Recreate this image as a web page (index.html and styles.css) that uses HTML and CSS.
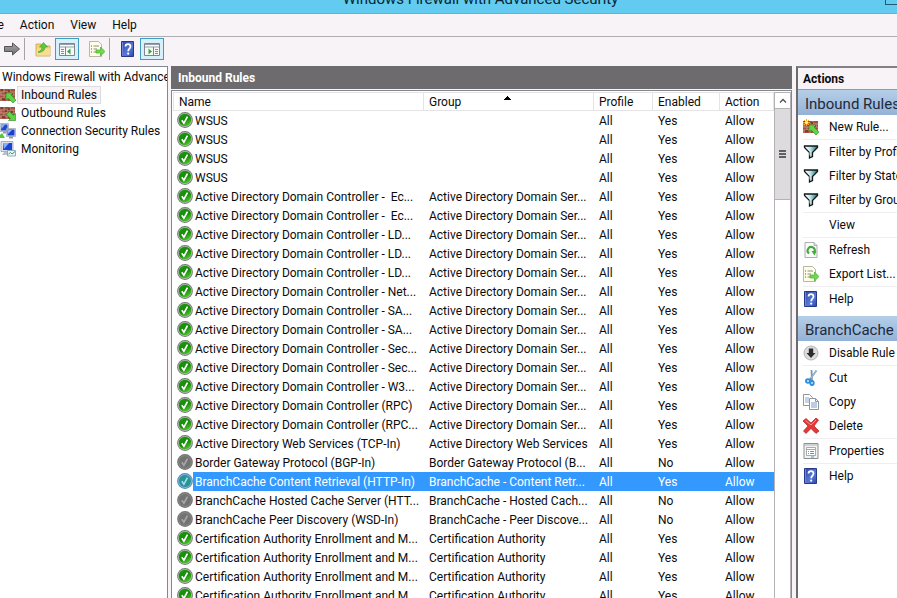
FILE: index.html
```
<!DOCTYPE html>
<html lang="en">
<head>
<meta charset="utf-8">
<title>Windows Firewall with Advanced Security</title>
<link rel="stylesheet" href="styles.css">
</head>
<body>
<svg class="sprite" aria-hidden="true">
  <defs>
    <linearGradient id="gGreen" x1="0" y1="0" x2="0.6" y2="1"><stop offset="0" stop-color="#1f9a12"/><stop offset="0.6" stop-color="#168a08"/><stop offset="1" stop-color="#4cc22c"/></linearGradient>
    <linearGradient id="gHelp" x1="0" y1="0" x2="1" y2="1"><stop offset="0" stop-color="#2e45a4"/><stop offset="0.6" stop-color="#5878d8"/><stop offset="1" stop-color="#2c44a8"/></linearGradient>
    <linearGradient id="gFunnel" x1="0" y1="0" x2="1" y2="0"><stop offset="0" stop-color="#ffffff"/><stop offset="0.45" stop-color="#bfe4e4"/><stop offset="1" stop-color="#0c6f78"/></linearGradient>
    <linearGradient id="gArrow" x1="0" y1="0" x2="0" y2="1"><stop offset="0" stop-color="#a9a9a9"/><stop offset="1" stop-color="#6e6e6e"/></linearGradient>
  </defs>
  <symbol id="ok" viewBox="0 0 16 16"><circle cx="8" cy="8" r="7.9" fill="#6f7a70"/><circle cx="8" cy="8" r="7" fill="#b4bdb2"/><circle cx="8" cy="8" r="6.2" fill="url(#gGreen)"/><path d="M4.8 8.2l2.1 3 3.6-6.6" fill="none" stroke="#fff" stroke-width="1.7"/></symbol>
  <symbol id="off" viewBox="0 0 16 16"><circle cx="8" cy="8" r="7.9" fill="#757575"/><circle cx="8" cy="8" r="6.8" fill="#8b8b8b"/><circle cx="8" cy="8" r="6" fill="#737373"/><path d="M4.8 8.2l2.1 3 3.6-6.6" fill="none" stroke="#a8a8a8" stroke-width="1.6"/></symbol>
  <symbol id="sel" viewBox="0 0 16 16"><circle cx="8" cy="8" r="7.9" fill="#4f8bb8"/><circle cx="8" cy="8" r="7" fill="#78b2e0"/><circle cx="8" cy="8" r="6" fill="#2a9490"/><path d="M4.8 8.2l2.1 3 3.6-6.6" fill="none" stroke="#a5daf5" stroke-width="1.6"/></symbol>
  <symbol id="bricks" viewBox="0 0 16 16"><path d="M0 2h15v12H0z" fill="#a4503f"/><path d="M0 5h15M0 8h15M0 11h15M4 2v3M10 2v3M1 5v3M7 5v3M13 5v3M4 8v3M10 8v3M1 11v3M7 11v3" stroke="#c99a8c" stroke-width="0.8"/><path d="M1 3h2M5 6h2M8 4h2M2 12h3M11 7h2" stroke="#6e3327" stroke-width="1.4"/></symbol>
  <symbol id="inbound" viewBox="0 0 16 16"><use href="#bricks"/><path d="M6 6h7l-2 2 5 5-3 3-5-5-2 2z" fill="#5fd445" stroke="#268c1c" stroke-width="0.6"/></symbol>
  <symbol id="outbound" viewBox="0 0 16 16"><use href="#bricks"/><path d="M15.500 15.500h-7l2-2-4-4 3-3 4 4 2-2z" fill="#5fd445" stroke="#268c1c" stroke-width="0.6"/></symbol>
  <symbol id="newrule" viewBox="0 0 16 16"><use href="#inbound"/><path d="M3.500 0v7M0 3.500h7M1 1l5 5M6 1l-5 5" stroke="#f6a92c" stroke-width="1"/><circle cx="3.500" cy="3.500" r="1.500" fill="#fff3a0"/></symbol>
  <symbol id="consec" viewBox="0 0 16 16"><path d="M0 .5h8.500v8H0z" fill="#d9dde8" stroke="#8c94a8" stroke-width="0.6"/><path d="M1 1.500h6.500v6H1z" fill="#2148d0"/><path d="M1 1.500h4L1.500 6z" fill="#8fb4f8"/><path d="M3 8.500h3v2H3z" fill="#8e98ad"/><path d="M6.500 5.500h9v8h-9z" fill="#d9dde8" stroke="#8c94a8" stroke-width="0.6"/><path d="M7.500 6.500h7v6h-7z" fill="#1b3ed0"/><path d="M8 7h4l-4 4z" fill="#8fb4f8"/><path d="M9 13.500h4v2H9z" fill="#8e98ad"/><path d="M0 15v-3l2-2 3 5z" fill="#55c83a"/></symbol>
  <symbol id="monitor" viewBox="0 0 16 16"><path d="M1 0.500h12v10H1z" fill="#dadfe8" stroke="#8a93a8" stroke-width="0.7"/><path d="M3 2h9v7H3z" fill="#1a44d6"/><path d="M3 2h6L4 8z" fill="#84b0f8"/><path d="M4 11h5l1 3H2z" fill="#b7bfcc"/><path d="M7.500 9.500h8v5.500h-8z" fill="#e8f4fa" stroke="#7e9ab0" stroke-width="0.8"/><path d="M8.500 13l2-1.500 1.500 1.500 3-2.500" fill="none" stroke="#34a25c"/></symbol>
  <symbol id="funnel" viewBox="0 0 16 16"><path d="M1.500 2h13v1.500l-5 5v4l-3 1.500v-5.500l-5-5z" fill="url(#gFunnel)" stroke="#10181c" stroke-width="1.300"/><path d="M3 3l4 4.500v4" fill="none" stroke="#fff" stroke-width="0.8"/></symbol>
  <symbol id="refresh" viewBox="0 0 16 16"><path d="M2 .5h9l3 3v12H2z" fill="#fafafa" stroke="#9a9a9a" stroke-width="0.8"/><path d="M11 .5v3h3" fill="#ddd" stroke="#9a9a9a" stroke-width="0.7"/><path d="M6 11.500a3.600 3.600 0 1 1 5.500-1.500" fill="none" stroke="#3dab35" stroke-width="2"/><path d="M8.500 9h5l-2 4.500z" fill="#3dab35"/></symbol>
  <symbol id="export" viewBox="0 0 16 16"><path d="M.5.5h9l3 3v12H.5z" fill="#fffde8" stroke="#a9a590" stroke-width="0.8"/><path d="M2 5h1M2 8h1M2 11h1" stroke="#555" stroke-width="1.200"/><path d="M4.500 5H10M4.500 8H8M4.500 11H8" stroke="#8c8c8c"/><path d="M7 9h4.500V6l4.500 4.500-4.500 4.500v-3H7z" fill="#6fd84c" stroke="#4caa35" stroke-width="0.7"/></symbol>
  <symbol id="help" viewBox="0 0 16 16"><path d="M1.500.5h12v15h-12z" fill="url(#gHelp)" stroke="#26388a"/><path d="M2.500 1v14" stroke="#6f86d8"/><path d="M5.500 5.500c0-3.200 5-3.200 5 0 0 2-2.300 2.200-2.300 4.700" fill="none" stroke="#fff" stroke-width="1.700"/><circle cx="8.200" cy="12.700" r="1.100" fill="#fff"/></symbol>
  <symbol id="disable" viewBox="0 0 16 16"><circle cx="8" cy="8" r="7" fill="#dcdcdc" stroke="#b4b4b4"/><path d="M5.800 3.500h4.400V8h2.300L8 13 3.500 8h2.300z" fill="#2c2c2c"/></symbol>
  <symbol id="cut" viewBox="0 0 16 16"><path d="M13.500.5L6.500 10M8.500 0L9 11" stroke="#7c98b0" stroke-width="1.800"/><path d="M13.500.5L8 8" stroke="#c4d4e0" stroke-width="0.700"/><ellipse cx="5" cy="11" rx="2" ry="1.800" fill="none" stroke="#2a8fdc" stroke-width="1.900"/><ellipse cx="9" cy="13" rx="1.700" ry="2" fill="none" stroke="#2a8fdc" stroke-width="1.900"/></symbol>
  <symbol id="copy" viewBox="0 0 16 16"><path d="M.5.500h6l3 3v8h-9z" fill="#fff" stroke="#8e969e"/><path d="M2 4h4M2 6h5M2 8h4" stroke="#8ca8c8"/><path d="M6.500 4.500h6l3 3v8h-9z" fill="#fff" stroke="#8e969e"/><path d="M12.500 4.500v3h3" fill="none" stroke="#8e969e"/><path d="M8 9h6M8 11h6M8 13h6" stroke="#7a9cc4"/></symbol>
  <symbol id="delete" viewBox="0 0 16 16"><path d="M0 3l3-2.500 5 4.500 5-5 2.500 2-4.500 6 5 5-3 2.500-5-5-5 5L.5 13 5 8z" fill="#e23838" stroke="#b81c1c" stroke-width="0.7"/><path d="M2.500 2.500l5.500 4.500 5-5" fill="none" stroke="#f49a94"/></symbol>
  <symbol id="props" viewBox="0 0 16 16"><path d="M1 .5h14v15H1z" fill="#f2f2f2" stroke="#8d8d8d"/><path d="M1.500 2h13" stroke="#a9b0b8"/><path d="M3.500 4.500h9v8h-9z" fill="#fff" stroke="#9aa2aa" stroke-width="0.900"/><path d="M3.500 6.500h9" stroke="#a8a8a8"/><path d="M5 8.500h1M5 10.500h1" stroke="#35b5c8"/><path d="M7 8.500h4M7 10.500h4" stroke="#8a8a8a"/><path d="M8 14h3" stroke="#49cbe0" stroke-width="1.400"/></symbol>
  <symbol id="forward" viewBox="0 0 16 16"><path d="M.5 5.500h8V2L15.500 8l-7 6v-3.500h-8z" fill="url(#gArrow)" stroke="#555"/></symbol>
  <symbol id="folder" viewBox="0 0 16 16"><path d="M1 15V3h5l1.500 2H15v10z" fill="#f2d27a" stroke="#c9a24c" stroke-width="0.8"/><path d="M1.500 14.500l.5-7h13v7z" fill="#f8dd90"/><path d="M3 11c3-1 4-3 4-5H4.500l4-4.500L12.500 6H10c0 3-2 5-6.500 5.500z" fill="#5fc93e" stroke="#3a9a26" stroke-width="0.600"/></symbol>
  <symbol id="treepane" viewBox="0 0 16 16"><path d="M.5 2.500h15v12H.5z" fill="#f8f8f8" stroke="#7d868e"/><path d="M1 3.500h14M1 6h14" stroke="#98a1a8"/><path d="M6.500 6v8" stroke="#7d868e"/><path d="M2 8.500h3M2 10.500h3M2 12.500h3" stroke="#6b92b8"/><path d="M11.500 7.500v6L8 10.500z" fill="#3aa83a"/></symbol>
  <symbol id="actpane" viewBox="0 0 16 16"><path d="M.5 2.500h15v12H.5z" fill="#f8f8f8" stroke="#7d868e"/><path d="M1 3.500h14M1 6h14" stroke="#98a1a8"/><path d="M9.500 6v8" stroke="#7d868e"/><path d="M11 8.500H14M11 10.500H14M11 12.500H14" stroke="#6b92b8"/><path d="M4.500 7.500v6L8 10.500z" fill="#3aa83a"/></symbol>
</svg>
<div class="window">
  <header class="title">Windows Firewall with Advanced Security<span class="caption"></span></header>
  <nav class="menu"><button>File</button><button>Action</button><button>View</button><button>Help</button></nav>
  <div class="toolbar">
    <button aria-label="Forward"><svg><use href="#forward"/></svg></button>
    <span class="rule"></span>
    <button aria-label="Up one level"><svg><use href="#folder"/></svg></button>
    <button class="on" aria-label="Show or hide console tree"><svg><use href="#treepane"/></svg></button>
    <span class="space"></span>
    <button aria-label="Export list"><svg><use href="#export"/></svg></button>
    <span class="rule"></span>
    <button aria-label="Help"><svg><use href="#help"/></svg></button>
    <button class="on" aria-label="Show or hide action pane"><svg><use href="#actpane"/></svg></button>
  </div>
  <div class="panes">
    <nav class="tree">
      <a class="root" href="#">Windows Firewall with Advanced Security</a>
      <a href="#"><svg><use href="#inbound"/></svg><span class="current">Inbound Rules</span></a>
      <a href="#"><svg><use href="#outbound"/></svg><span>Outbound Rules</span></a>
      <a href="#"><svg><use href="#consec"/></svg><span>Connection Security Rules</span></a>
      <a href="#"><svg><use href="#monitor"/></svg><span>Monitoring</span></a>
    </nav>
    <main class="center">
      <h1>Inbound Rules</h1>
      <div class="list">
        <table>
          <colgroup><col class="c-name"><col class="c-group"><col class="c-profile"><col class="c-enabled"><col></colgroup>
          <thead><tr><th>Name</th><th class="sorted">Group</th><th>Profile</th><th>Enabled</th><th>Action</th></tr></thead>
          <tbody>
            <tr><td><svg><use href="#ok"/></svg>WSUS</td><td></td><td>All</td><td>Yes</td><td>Allow</td></tr>
            <tr><td><svg><use href="#ok"/></svg>WSUS</td><td></td><td>All</td><td>Yes</td><td>Allow</td></tr>
            <tr><td><svg><use href="#ok"/></svg>WSUS</td><td></td><td>All</td><td>Yes</td><td>Allow</td></tr>
            <tr><td><svg><use href="#ok"/></svg>WSUS</td><td></td><td>All</td><td>Yes</td><td>Allow</td></tr>
            <tr><td><svg><use href="#ok"/></svg>Active Directory Domain Controller -  Ec...</td><td>Active Directory Domain Ser...</td><td>All</td><td>Yes</td><td>Allow</td></tr>
            <tr><td><svg><use href="#ok"/></svg>Active Directory Domain Controller -  Ec...</td><td>Active Directory Domain Ser...</td><td>All</td><td>Yes</td><td>Allow</td></tr>
            <tr><td><svg><use href="#ok"/></svg>Active Directory Domain Controller - LD...</td><td>Active Directory Domain Ser...</td><td>All</td><td>Yes</td><td>Allow</td></tr>
            <tr><td><svg><use href="#ok"/></svg>Active Directory Domain Controller - LD...</td><td>Active Directory Domain Ser...</td><td>All</td><td>Yes</td><td>Allow</td></tr>
            <tr><td><svg><use href="#ok"/></svg>Active Directory Domain Controller - LD...</td><td>Active Directory Domain Ser...</td><td>All</td><td>Yes</td><td>Allow</td></tr>
            <tr><td><svg><use href="#ok"/></svg>Active Directory Domain Controller - Net...</td><td>Active Directory Domain Ser...</td><td>All</td><td>Yes</td><td>Allow</td></tr>
            <tr><td><svg><use href="#ok"/></svg>Active Directory Domain Controller - SA...</td><td>Active Directory Domain Ser...</td><td>All</td><td>Yes</td><td>Allow</td></tr>
            <tr><td><svg><use href="#ok"/></svg>Active Directory Domain Controller - SA...</td><td>Active Directory Domain Ser...</td><td>All</td><td>Yes</td><td>Allow</td></tr>
            <tr><td><svg><use href="#ok"/></svg>Active Directory Domain Controller - Sec...</td><td>Active Directory Domain Ser...</td><td>All</td><td>Yes</td><td>Allow</td></tr>
            <tr><td><svg><use href="#ok"/></svg>Active Directory Domain Controller - Sec...</td><td>Active Directory Domain Ser...</td><td>All</td><td>Yes</td><td>Allow</td></tr>
            <tr><td><svg><use href="#ok"/></svg>Active Directory Domain Controller - W3...</td><td>Active Directory Domain Ser...</td><td>All</td><td>Yes</td><td>Allow</td></tr>
            <tr><td><svg><use href="#ok"/></svg>Active Directory Domain Controller (RPC)</td><td>Active Directory Domain Ser...</td><td>All</td><td>Yes</td><td>Allow</td></tr>
            <tr><td><svg><use href="#ok"/></svg>Active Directory Domain Controller (RPC...</td><td>Active Directory Domain Ser...</td><td>All</td><td>Yes</td><td>Allow</td></tr>
            <tr><td><svg><use href="#ok"/></svg>Active Directory Web Services (TCP-In)</td><td>Active Directory Web Services</td><td>All</td><td>Yes</td><td>Allow</td></tr>
            <tr><td><svg><use href="#off"/></svg>Border Gateway Protocol (BGP-In)</td><td>Border Gateway Protocol (B...</td><td>All</td><td>No</td><td>Allow</td></tr>
            <tr class="selected"><td><svg><use href="#sel"/></svg>BranchCache Content Retrieval (HTTP-In)</td><td>BranchCache - Content Retr...</td><td>All</td><td>Yes</td><td>Allow</td></tr>
            <tr><td><svg><use href="#off"/></svg>BranchCache Hosted Cache Server (HTT...</td><td>BranchCache - Hosted Cach...</td><td>All</td><td>No</td><td>Allow</td></tr>
            <tr><td><svg><use href="#off"/></svg>BranchCache Peer Discovery (WSD-In)</td><td>BranchCache - Peer Discove...</td><td>All</td><td>No</td><td>Allow</td></tr>
            <tr><td><svg><use href="#ok"/></svg>Certification Authority Enrollment and M...</td><td>Certification Authority</td><td>All</td><td>Yes</td><td>Allow</td></tr>
            <tr><td><svg><use href="#ok"/></svg>Certification Authority Enrollment and M...</td><td>Certification Authority</td><td>All</td><td>Yes</td><td>Allow</td></tr>
            <tr><td><svg><use href="#ok"/></svg>Certification Authority Enrollment and M...</td><td>Certification Authority</td><td>All</td><td>Yes</td><td>Allow</td></tr>
            <tr><td><svg><use href="#ok"/></svg>Certification Authority Enrollment and M...</td><td>Certification Authority</td><td>All</td><td>Yes</td><td>Allow</td></tr>
          </tbody>
        </table>
        <div class="scroll"><button aria-label="Scroll up"><svg viewBox="0 0 8 6"><path d="M1 4.500l3-3 3 3" fill="none" stroke="#505050" stroke-width="1.300"/></svg></button><div class="thumb"><i></i><i></i><i></i></div></div>
      </div>
    </main>
    <aside class="actions">
      <h2>Actions</h2>
      <h3>Inbound Rules</h3>
      <ul>
        <li><button><svg><use href="#newrule"/></svg>New Rule...</button></li>
        <li class="sep"><button><svg><use href="#funnel"/></svg>Filter by Profile</button></li>
        <li><button><svg><use href="#funnel"/></svg>Filter by State</button></li>
        <li><button><svg><use href="#funnel"/></svg>Filter by Group</button></li>
        <li class="sep"><button><svg></svg>View</button></li>
        <li class="sep"><button><svg><use href="#refresh"/></svg>Refresh</button></li>
        <li><button><svg><use href="#export"/></svg>Export List...</button></li>
        <li class="sep"><button><svg><use href="#help"/></svg>Help</button></li>
      </ul>
      <h3>BranchCache Content Retrieval (HTTP-In)</h3>
      <ul>
        <li><button><svg><use href="#disable"/></svg>Disable Rule</button></li>
        <li class="sep"><button><svg><use href="#cut"/></svg>Cut</button></li>
        <li><button><svg><use href="#copy"/></svg>Copy</button></li>
        <li><button><svg><use href="#delete"/></svg>Delete</button></li>
        <li class="sep"><button><svg><use href="#props"/></svg>Properties</button></li>
        <li class="sep"><button><svg><use href="#help"/></svg>Help</button></li>
      </ul>
    </aside>
  </div>
</div>
</body>
</html>
```
FILE: styles.css
```
* { box-sizing: border-box; }
body { margin: 0; background: #f7f3f7; color: #0c0c0c; font: 12px/18px Roboto, "Open Sans", sans-serif; }
button { margin: 0; padding: 0; border: 0; background: none; color: inherit; font: inherit; }
a { color: inherit; text-decoration: none; }
svg { width: 16px; height: 16px; flex: none; display: block; }
.sprite { position: absolute; width: 0; height: 0; }
.window { height: 100vh; display: flex; flex-direction: column; overflow: hidden; white-space: nowrap; }

.title { position: relative; height: 14px; flex: none; display: flex; align-items: flex-end; justify-content: center; padding: 0 0 4px 64px; overflow: hidden; background: #63cbef; border-bottom: 1px solid #7fa9bb; color: #08262f; font-size: 15px; line-height: 20px; }
.caption { position: absolute; right: 0; top: 0; width: 12px; height: 5px; border: 1px solid #1e5a70; border-top: 0; border-right: 0; }

.menu { height: 23px; flex: none; display: flex; align-items: center; gap: 16px; padding-right: 15px; border-bottom: 1px solid #b0adb0; }
.menu button:first-child { margin-left: -15px; }
.toolbar { height: 29px; flex: none; display: flex; align-items: center; padding: 0 0 5px 0; }
.toolbar button { width: 24px; height: 22px; display: flex; align-items: center; justify-content: center; }
.toolbar .on { border: 1px solid #3f9cc0; background: #d8f0fb; }
.toolbar .rule { width: 1px; height: 22px; margin: 0 6px 0 0; background: #a5a3a5; }
.toolbar .space { width: 6px; }

.panes { flex: 1; min-height: 0; display: flex; }
.tree { width: 168px; flex: none; padding-top: 1px; overflow: hidden; background: #fff; border-top: 1px solid #828790; border-right: 1px solid #828790; }
.tree a { display: flex; align-items: center; gap: 2px; height: 18px; }
.tree .root { padding-left: 2px; }
.tree span { padding: 0 3px; line-height: 18px; }
.tree .current { margin: 0 -1px; line-height: 16px; background: #f7f3f7; border: 1px solid #dedade; }

.center { flex: 1; min-width: 0; margin: 0 4px 0 3px; display: flex; flex-direction: column; }
.center h1 { flex: none; height: 23px; margin: 0 0 1px; padding: 2px 7px 0; background: #6d6b6d; color: #fff; font-size: 12px; line-height: 21px; }
.list { flex: 1; min-height: 0; display: flex; padding: 1px 0 0 1px; overflow: hidden; background: #fff; border: 1px solid #828790; border-bottom: 0; }
table { flex: 1; min-width: 0; align-self: flex-start; table-layout: fixed; border-collapse: separate; border-spacing: 0; }
.c-name { width: 251px; }
.c-group { width: 170px; }
.c-profile { width: 59px; }
.c-enabled { width: 67px; }
th { height: 19px; padding: 2px 5px 0; border: 1px solid #e6e3e6; border-left: 0; text-align: left; font-weight: 400; line-height: 15px; }
th:first-child { border-left: 1px solid #e6e3e6; }
.sorted { background: conic-gradient(from 135deg at 50% 0, #000 90deg, transparent 0) 49% 3px / 8px 4px no-repeat; }
td { height: 19px; padding: 2px 0 0 5px; line-height: 17px; overflow: hidden; white-space: pre; }
td svg { float: left; margin: -1px 2px 0 -1px; }
.selected td { background: #3399ff; color: #fff; }
.selected td:first-child { background: linear-gradient(#3399ff, #3399ff) 20px 0 no-repeat; }
.scroll { width: 17px; flex: none; border-left: 1px solid #b5b2b5; border-right: 1px solid #b5b2b5; }
.scroll button { width: 15px; height: 17px; display: flex; align-items: center; justify-content: center; border: 1px solid #b5b2b5; border-width: 1px 0; }
.scroll button svg { width: 8px; height: 6px; }
.thumb { height: 91px; display: flex; flex-direction: column; align-items: center; justify-content: center; gap: 1px; background: #dedbde; border-bottom: 1px solid #b5b2b5; }
.thumb i { width: 7px; height: 2px; background: #606060; }

.actions { width: 101px; flex: none; overflow: hidden; background: #fff; border-top: 2px solid #828187; border-left: 2px solid #6d6b6d; }
.actions h2 { height: 22px; margin: 0; padding: 0 5px; background: #f7f3f7; border-bottom: 1px solid #9a98a0; font-size: 12px; line-height: 22px; }
.actions h3 { height: 25px; margin: 0; padding: 3px 7px 0; overflow: hidden; background: linear-gradient(#b5cfe9, #94b2d6); color: #1c2a3c; font-size: 15px; font-weight: 400; line-height: 22px; }
.actions ul { margin: 0 0 5px; padding: 0 0 0 5px; list-style: none; }
.actions .sep { border-top: 1px solid #efedef; }
.actions li button { height: 24px; display: flex; align-items: center; gap: 10px; }
```
